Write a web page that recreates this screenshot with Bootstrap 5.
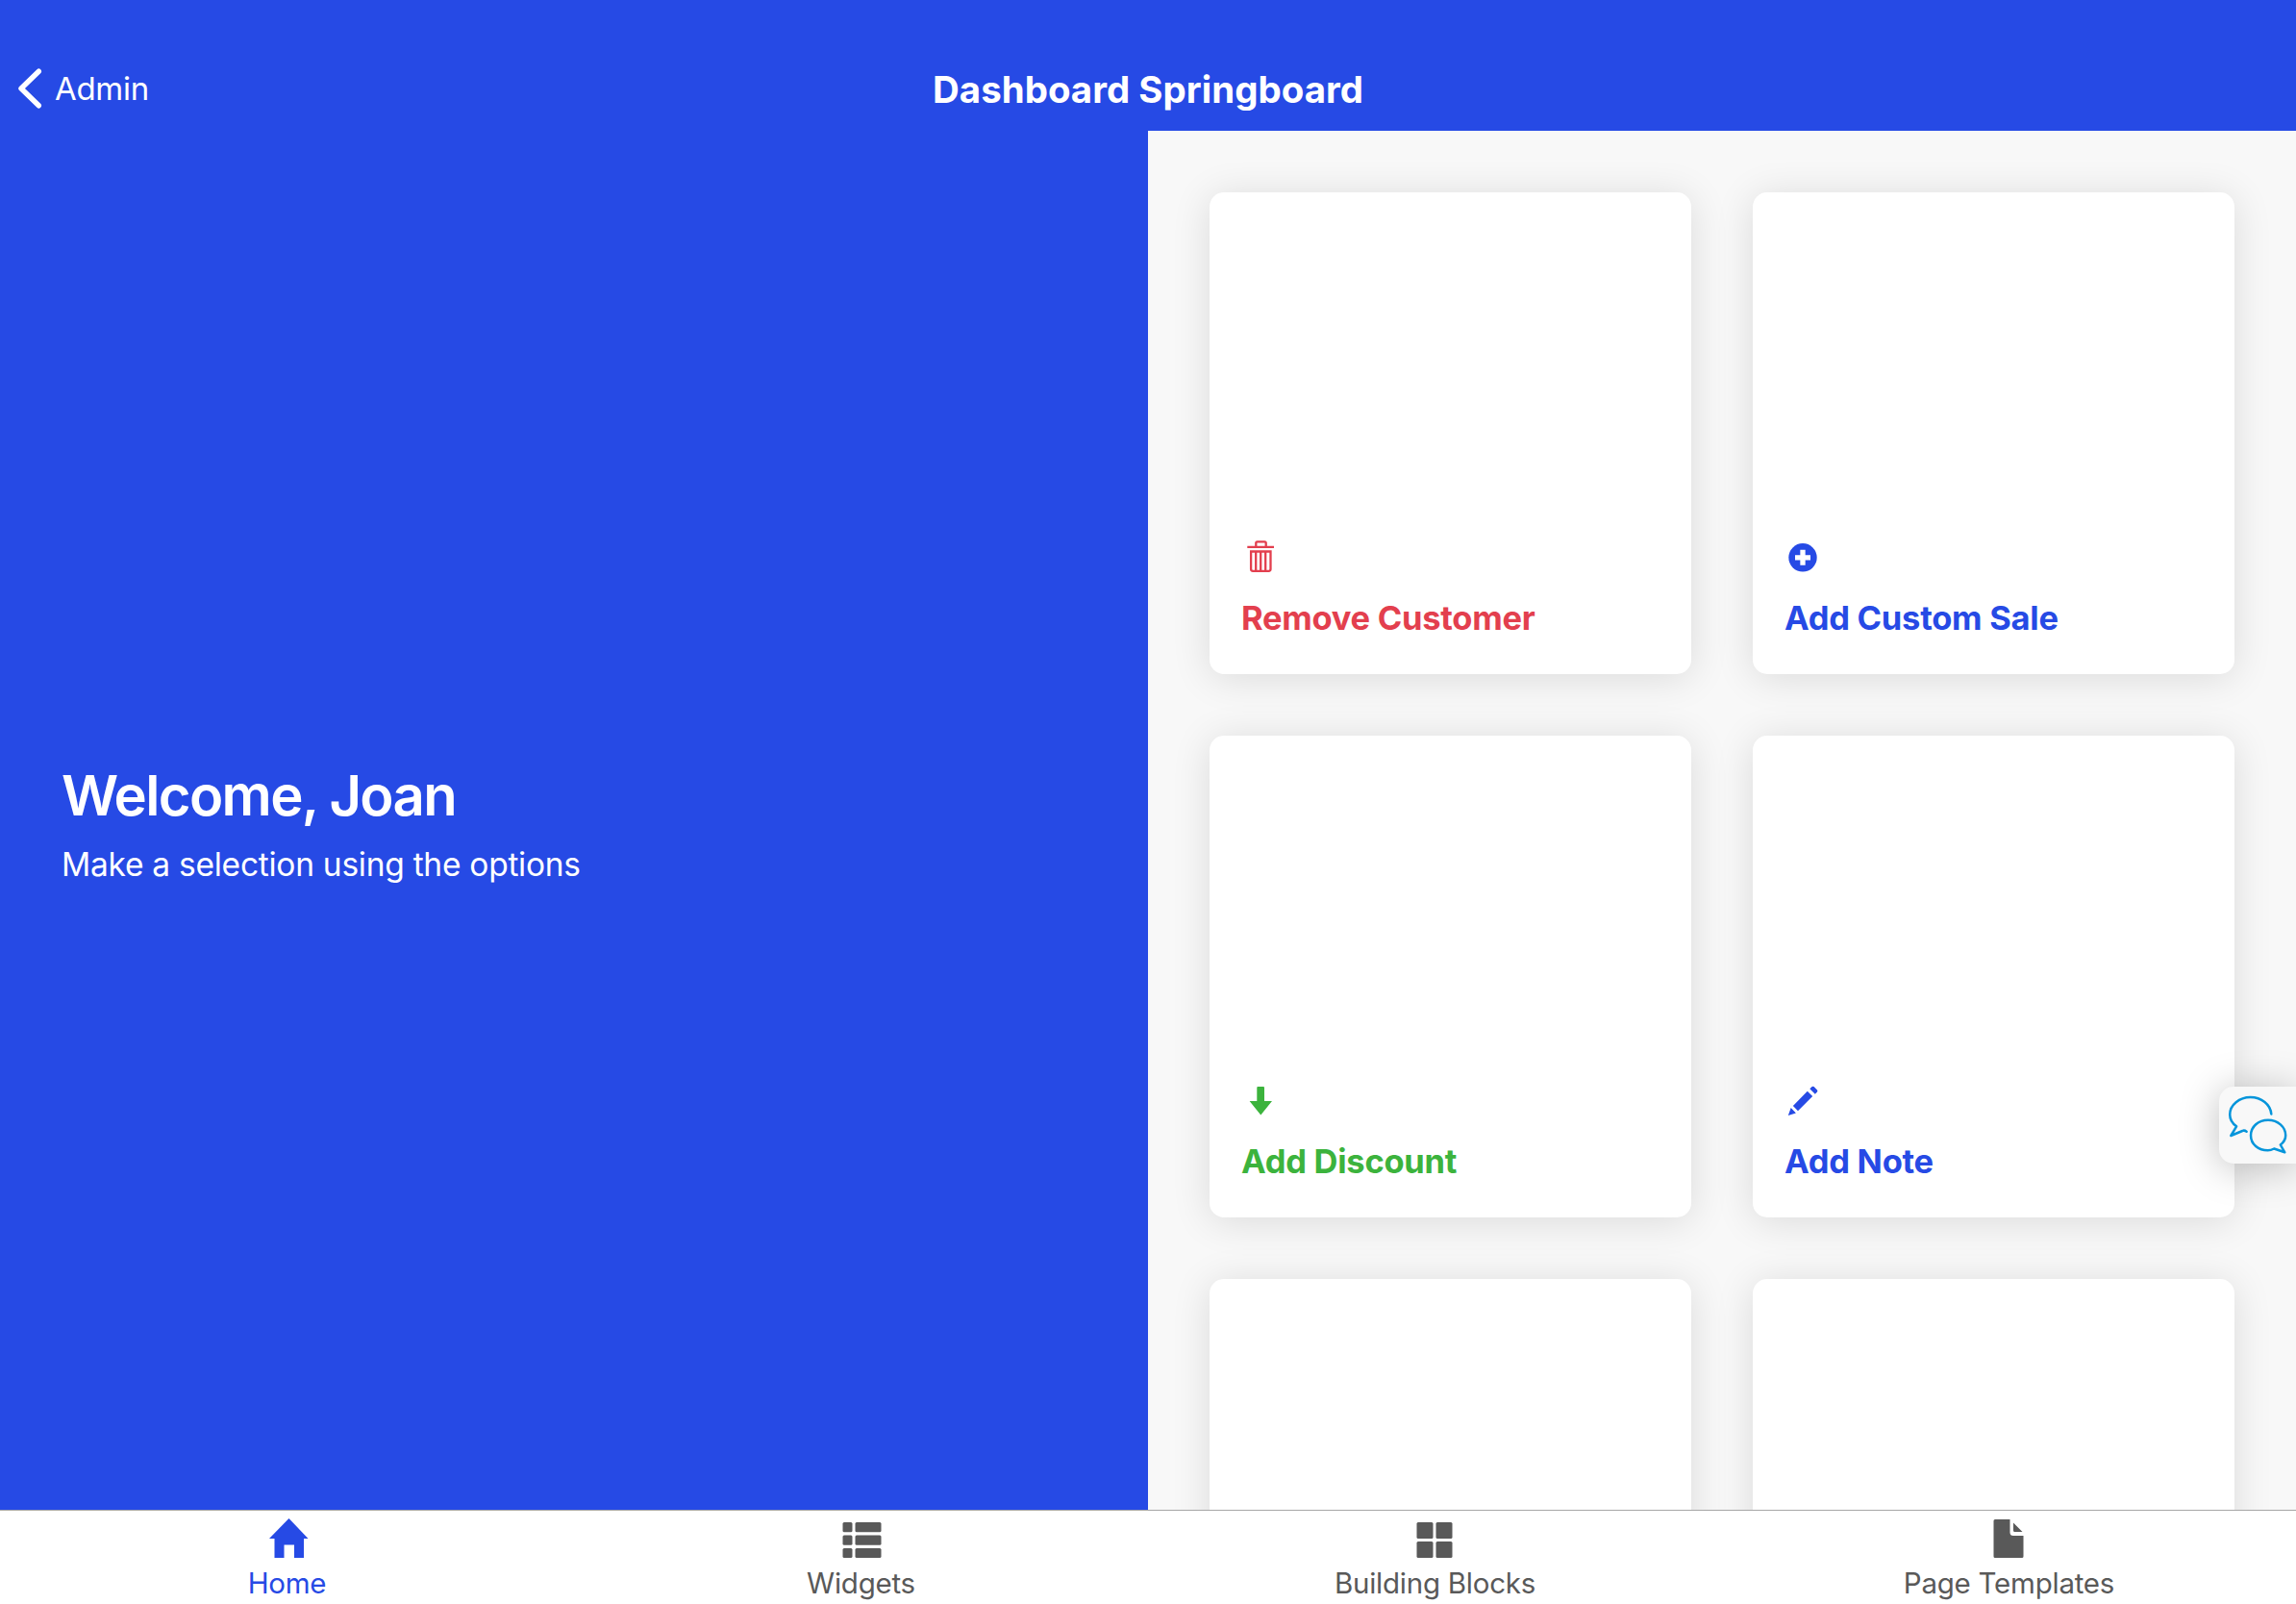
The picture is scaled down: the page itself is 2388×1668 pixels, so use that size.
<!DOCTYPE html>
<html lang="en">
<head>
<meta charset="utf-8">
<meta name="viewport" content="width=device-width, initial-scale=1">
<title>Dashboard Springboard</title>
<link href="https://cdn.jsdelivr.net/npm/bootstrap@5.3.0/dist/css/bootstrap.min.css" rel="stylesheet">
<style>
  :root { --brand:#264ae5; --danger:#e33f4e; --success:#3cb33d; }
  body { font-family: Inter, "Liberation Sans", sans-serif; background:#f8f8f8; color:#fff; }
  svg { display:block; flex:none; }
  .topbar { height:136px; background:var(--brand); padding:70px 18px 0; }
  .topbar > div { flex:1 1 0; }
  .back-link { font-size:33px; line-height:40px; gap:13px; letter-spacing:-.3px; }
  .page-title { font-size:38.4px; line-height:46px; font-weight:700; white-space:nowrap; letter-spacing:.05px; }
  .welcome { background:var(--brand); padding:6px 64px 0; }
  .welcome h1 { font-size:58px; line-height:72px; font-weight:600; letter-spacing:-1.65px; }
  .welcome p { font-size:33.5px; line-height:44px; margin:14px 0 0; letter-spacing:-.26px; }
  .tiles { padding:64px; background:#f8f8f8; }
  .tile-grid { --bs-gutter-x:64px; --bs-gutter-y:64px; }
  .tile { height:501px; border-radius:15px; border:0; box-shadow:0 4px 40px rgba(0,0,0,.12); padding:0 33px 35px; font-size:34.5px; font-weight:700; line-height:46px; letter-spacing:-.26px; }
  .tile svg { margin-bottom:20px; }
  .tile span { white-space:nowrap; }
  .tone-brand { color:var(--brand); } .tone-danger { color:var(--danger); } .tone-success { color:var(--success); }
  .tabbar { height:98px; background:#fff; border-top:1px solid #a6a6a6; color:#595959; font-size:29.5px; line-height:36px; letter-spacing:-.24px; position:relative; z-index:2; }
  .tabbar svg { margin-top:5px; margin-bottom:4px; }
  .chat-tab { position:absolute; right:0; top:1130px; width:80px; height:80px; background:#f8f8f8; border-radius:15px 0 0 15px; box-shadow:0 4px 40px rgba(0,0,0,.25); z-index:3; }
</style>
</head>
<body class="vh-100 overflow-hidden d-flex flex-column position-relative">
  <header class="topbar d-flex align-items-start flex-shrink-0">
    <div><a class="back-link d-inline-flex align-items-center text-white text-decoration-none" href="#">
      <svg width="26" height="44" viewBox="0 0 26 44" fill="none" stroke="#fff" stroke-width="5.4" stroke-linecap="round" stroke-linejoin="round"><path d="M22.3 4.2 4 22l18.3 17.8"/></svg>
      <span>Admin</span></a></div>
    <h1 class="page-title m-0">Dashboard Springboard</h1>
    <div></div>
  </header>
  <main class="row g-0 flex-grow-1 overflow-hidden">
    <section class="col-6 welcome h-100 d-flex flex-column justify-content-center">
      <h1 class="m-0">Welcome, Joan</h1>
      <p>Make a selection using the options</p>
    </section>
    <section class="col-6 tiles h-100 overflow-hidden">
      <div class="row tile-grid">
        <div class="col-6"><a class="tile card justify-content-end align-items-start tone-danger text-decoration-none" href="#">
          <svg width="40" height="40" viewBox="0 0 40 40" fill="none" stroke="currentColor" stroke-width="2.3"><path d="M6.3 8.8H34M15.3 8V4.8q0-1.4 1.4-1.4h7.6q1.4 0 1.4 1.4V8M10.1 13.5h20.4v18.3q0 2-2 2H12.1q-2 0-2-2zM15.2 13.5v20.3M20.2 13.5v20.3M25.2 13.5v20.3"/></svg>
          <span>Remove Customer</span></a></div>
        <div class="col-6"><a class="tile card justify-content-end align-items-start tone-brand text-decoration-none" href="#">
          <svg width="40" height="40" viewBox="0 0 40 40"><circle cx="19" cy="19.8" r="14.7" fill="currentColor"/><path d="M19 11.8v16M11 19.8h16" stroke="#fff" stroke-width="5.3"/></svg>
          <span>Add Custom Sale</span></a></div>
        <div class="col-6"><a class="tile card justify-content-end align-items-start tone-success text-decoration-none" href="#">
          <svg width="40" height="40" viewBox="0 0 40 40" fill="currentColor"><path d="M17.3 5H23q1 0 1 1v14h8L20.3 34.4 8.6 20h7.7V6q0-1 1-1z"/></svg>
          <span>Add Discount</span></a></div>
        <div class="col-6"><a class="tile card justify-content-end align-items-start tone-brand text-decoration-none" href="#">
          <svg width="40" height="40" viewBox="0 0 40 40" fill="currentColor"><path d="M3.8 35 6.7 27l5.2 5.4zM8.9 25l5.1 5.2L29.2 15l-5.4-5.2zM26.3 7.3l2.3-2.2q1-.8 2 0l3.4 3.5q.8 1 0 1.9l-2.2 2.2z"/></svg>
          <span>Add Note</span></a></div>
        <div class="col-6"><div class="tile card"></div></div>
        <div class="col-6"><div class="tile card"></div></div>
      </div>
    </section>
  </main>
  <nav class="tabbar row g-0 flex-shrink-0">
    <a class="col-3 d-flex flex-column align-items-center text-reset text-decoration-none" href="#">
      <svg class="tone-brand" width="48" height="48" viewBox="0 0 48 48" fill="currentColor"><path d="M25.5 3 45.5 24H41v20H31V30.5H20.5V44h-10V24H5z"/></svg>
      <span class="tone-brand">Home</span></a>
    <a class="col-3 d-flex flex-column align-items-center text-reset text-decoration-none" href="#">
      <svg width="48" height="48" viewBox="0 0 48 48" fill="currentColor"><rect x="4.5" y="7" width="10" height="10.3" rx="1.5"/><rect x="4.5" y="20.5" width="10" height="10.3" rx="1.5"/><rect x="4.5" y="34" width="10" height="10" rx="1.5"/><rect x="17.5" y="7" width="27" height="10.3" rx="1.5"/><rect x="17.5" y="20.5" width="27" height="10.3" rx="1.5"/><rect x="17.5" y="34" width="27" height="10" rx="1.5"/></svg>
      <span>Widgets</span></a>
    <a class="col-3 d-flex flex-column align-items-center text-reset text-decoration-none" href="#">
      <svg width="48" height="48" viewBox="0 0 48 48" fill="currentColor"><rect x="4.5" y="7" width="17" height="17" rx="1.5"/><rect x="24.5" y="7" width="17" height="17" rx="1.5"/><rect x="4.5" y="27" width="17" height="17" rx="1.5"/><rect x="24.5" y="27" width="17" height="17" rx="1.5"/></svg>
      <span>Building Blocks</span></a>
    <a class="col-3 d-flex flex-column align-items-center text-reset text-decoration-none" href="#">
      <svg width="48" height="48" viewBox="0 0 48 48" fill="currentColor"><path d="M9 4h15.5v13.5q0 3.5 3.5 3.5h10.5v21.5q0 1.5-1.5 1.5H9q-1.5 0-1.500-1.500v-37Q7.500 4 9 4zM28 7.500 37.500 17H29.500q-1.500 0-1.500-1.500z"/></svg>
      <span>Page Templates</span></a>
  </nav>
  <a class="chat-tab" href="#" aria-label="Chat">
    <svg width="80" height="80" viewBox="0 0 80 80" fill="none" stroke="#0595db" stroke-width="2.5" stroke-linecap="round" stroke-linejoin="round"><path d="M54.3 28.5C53.5 18.5 44 11 32.6 11S11.2 19 11.2 29q0 7.5 6.9 12.300L12.300 51l12-5q2-1 4.300.7M50.700 66.300C41 66.300 33 60 33 50.700S41 34.700 51 34.700s18.200 7 18.200 16q0 5.600-5.400 9.800l4.500 7.800-11.100-3.800q-3.500 1.800-6.500 1.800z"/></svg>
  </a>
<script src="https://cdn.jsdelivr.net/npm/bootstrap@5.3.0/dist/js/bootstrap.bundle.min.js"></script>
</body>
</html>
